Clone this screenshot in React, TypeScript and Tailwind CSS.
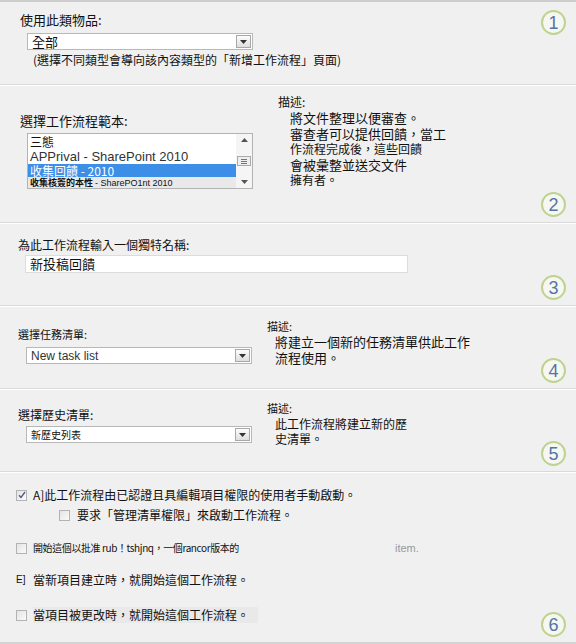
import React from "react";

const font = { fontFamily: '"Noto Sans CJK TC", "Liberation Sans", sans-serif' };
const latin = { fontFamily: '"Liberation Sans", sans-serif' };

function Step({ n }: { n: number }) {
  return (
    <div
      className="w-[25px] h-[25px] rounded-full border-2 border-[#bed291] bg-[#f7f7f2] flex items-center justify-center text-[18px] leading-none text-[#5374a8]"
      style={latin}
    >
      {n}
    </div>
  );
}

function Arrow() {
  return (
    <div className="w-[15px] h-[13px] border border-[#a8a8a8] bg-gradient-to-b from-[#fdfdfd] to-[#dedede] flex items-center justify-center">
      <svg width="7" height="4" viewBox="0 0 7 4">
        <path d="M0 0h7L3.5 4z" fill="#333" />
      </svg>
    </div>
  );
}

function Select({ value, className, textClass, latinText }: { value: string; className: string; textClass: string; latinText?: boolean }) {
  return (
    <div className={`flex items-center justify-between bg-white border border-[#b8b8b8] pl-1 pr-[1px] ${className}`}>
      <span className={textClass} style={latinText ? latin : undefined}>{value}</span>
      <Arrow />
    </div>
  );
}

function Divider() {
  return <div className="h-[2px] border-t border-[#d9d9d9] border-b border-b-white shrink-0" />;
}

function Box({ checked }: { checked?: boolean }) {
  return (
    <div className="w-[11px] h-[11px] border border-[#b3b3b3] bg-gradient-to-br from-[#e4e4e4] to-[#fafafa] flex items-center justify-center shrink-0">
      {checked && (
        <svg width="8" height="8" viewBox="0 0 8 8">
          <path d="M1 4.2l2 2.3L7 1" stroke="#4a5a8a" strokeWidth="1.3" fill="none" />
        </svg>
      )}
    </div>
  );
}

export default function App() {
  return (
    <div className="w-[576px] h-[644px] bg-[#f0f0f0] border-t-2 border-[#cdcdcd] text-[#111] flex flex-col overflow-hidden" style={font}>
      {/* item type */}
      <section className="h-[82px] flex shrink-0">
        <div className="flex-1 pl-[20px] pt-[10px]">
          <div className="text-[13px] leading-[16px]">使用此類物品:</div>
          <Select value="全部" className="ml-[7px] mt-[5px] w-[226px] h-[17px]" textClass="text-[13px] leading-none" />
          <div className="ml-[13px] mt-[2px] text-[12px] leading-[16px]">(選擇不同類型會導向該內容類型的「新增工作流程」頁面)</div>
        </div>
        <div className="pr-[10px] pt-[8px]">
          <Step n={1} />
        </div>
      </section>
      <Divider />

      {/* template */}
      <section className="h-[136px] flex shrink-0">
        <div className="w-[258px] pl-[20px] pt-[27px]">
          <div className="text-[13px] leading-[16px]">選擇工作流程範本:</div>
          <div className="ml-[7px] mt-[4px] w-[226px] h-[56px] bg-white border border-[#b3b3b3] flex">
            <div className="flex-1 flex flex-col">
              <div className="h-[15px] text-[12px] leading-[15px] pl-[2px]">三態</div>
              <div className="h-[15px] text-[13px] leading-[15px] pl-[2px] text-[#333]" style={latin}>
                APPrival - SharePoint 2010
              </div>
              <div className="h-[13px] text-[12px] leading-[13px] pl-[2px] bg-[#3c8ee6] text-white">收集回饋 - 2010</div>
              <div className="h-[11px] text-[9px] leading-[11px] pl-[2px] bg-[#e9e9e9] font-bold">
                收集核簽的本性 <span className="font-normal" style={latin}>- SharePO1nt 2010</span>
              </div>
            </div>
            <div className="w-[16px] bg-[#f5f5f5] flex flex-col items-center justify-between py-[4px]">
              <svg width="7" height="4" viewBox="0 0 7 4"><path d="M3.5 0L7 4H0z" fill="#555" /></svg>
              <div className="w-[14px] h-[10px] border border-[#aaa] bg-[#eee] flex flex-col items-center justify-center gap-[1px]">
                <div className="w-[6px] h-px bg-[#777]" />
                <div className="w-[6px] h-px bg-[#777]" />
                <div className="w-[6px] h-px bg-[#777]" />
              </div>
              <svg width="7" height="4" viewBox="0 0 7 4"><path d="M0 0h7L3.5 4z" fill="#555" /></svg>
            </div>
          </div>
        </div>
        <div className="flex-1 pl-[20px] pt-[8px]">
          <div className="text-[12px] leading-[16px]">描述:</div>
          <div className="pl-[12px] text-[13px] leading-[15.5px]">
            <div>將文件整理以便審查。</div>
            <div>審查者可以提供回饋，當工</div>
            <div className="text-[12px]">作流程完成後，這些回饋</div>
            <div>會被彙整並送交文件</div>
            <div className="text-[12px]">擁有者。</div>
          </div>
        </div>
        <div className="pr-[10px] pb-[5px] self-end">
          <Step n={2} />
        </div>
      </section>
      <Divider />

      {/* name */}
      <section className="h-[81px] flex shrink-0">
        <div className="flex-1 pl-[18px] pt-[13px]">
          <div className="text-[12px] leading-[16px]">為此工作流程輸入一個獨特名稱:</div>
          <div className="ml-[7px] mt-[2px] w-[383px] h-[18px] bg-white border border-[#dcdcdc] pl-[4px] text-[13px] leading-[16px]">新投稿回饋</div>
        </div>
        <div className="pr-[10px] pb-[5px] self-end">
          <Step n={3} />
        </div>
      </section>
      <Divider />

      {/* task list */}
      <section className="h-[81px] flex shrink-0">
        <div className="w-[258px] pl-[18px] pt-[19px]">
          <div className="text-[11px] leading-[16px]">選擇任務清單:</div>
          <Select value="New task list" latinText className="ml-[8px] mt-[5px] w-[226px] h-[17px]" textClass="text-[12px] leading-none text-[#333]" />
        </div>
        <div className="flex-1 pl-[9px] pt-[11px]">
          <div className="text-[11px] leading-[16px]">描述:</div>
          <div className="pl-[8px] text-[13px] leading-[16px]">
            <div>將建立一個新的任務清單供此工作</div>
            <div>流程使用。</div>
          </div>
        </div>
        <div className="pr-[10px] pb-[5px] self-end">
          <Step n={4} />
        </div>
      </section>
      <Divider />

      {/* history list */}
      <section className="h-[81px] flex shrink-0">
        <div className="w-[258px] pl-[18px] pt-[17px]">
          <div className="text-[12px] leading-[16px]">選擇歷史清單:</div>
          <Select value="新歷史列表" className="ml-[8px] mt-[3px] w-[226px] h-[17px]" textClass="text-[10px] leading-none" />
        </div>
        <div className="flex-1 pl-[9px] pt-[10px]">
          <div className="text-[11px] leading-[16px]">描述:</div>
          <div className="pl-[8px] text-[12px] leading-[15px]">
            <div>此工作流程將建立新的歷</div>
            <div>史清單。</div>
          </div>
        </div>
        <div className="pr-[10px] pb-[5px] self-end">
          <Step n={5} />
        </div>
      </section>
      <Divider />

      {/* start options */}
      <section className="flex-1 flex">
        <div className="flex-1 pl-[16px] pt-[14px]">
          <div className="flex items-center gap-[6px] h-[16px]">
            <Box checked />
            <span className="text-[12px] leading-none">A]此工作流程由已認證且具編輯項目權限的使用者手動啟動。</span>
          </div>
          <div className="flex items-center gap-[7px] h-[16px] ml-[43px] mt-[4px]">
            <Box />
            <span className="text-[12px] leading-none">要求「管理清單權限」來啟動工作流程。</span>
          </div>
          <div className="flex items-center gap-[6px] h-[16px] mt-[17px]">
            <Box />
            <span className="text-[10px] leading-none w-[356px] tracking-[-0.4px]">開始這個以批准 rub！tshjnq，一個rancor版本的</span>
            <span className="text-[11px] leading-none text-[#999]" style={latin}>item.</span>
          </div>
          <div className="flex items-center gap-[7px] h-[16px] mt-[16px]">
            <span className="text-[10px] leading-none w-[10px]" style={latin}>E]</span>
            <span className="text-[12px] leading-none">當新項目建立時，就開始這個工作流程。</span>
          </div>
          <div className="flex items-center gap-[6px] h-[16px] mt-[19px]">
            <Box />
            <span className="text-[12px] leading-[16px] bg-[#e9e9e9] w-[225px]">當項目被更改時，就開始這個工作流程。</span>
          </div>
        </div>
        <div className="pr-[10px] pb-[5px] self-end">
          <Step n={6} />
        </div>
      </section>
      <div className="h-[2px] bg-[#d3d3d3] shrink-0" />
    </div>
  );
}
